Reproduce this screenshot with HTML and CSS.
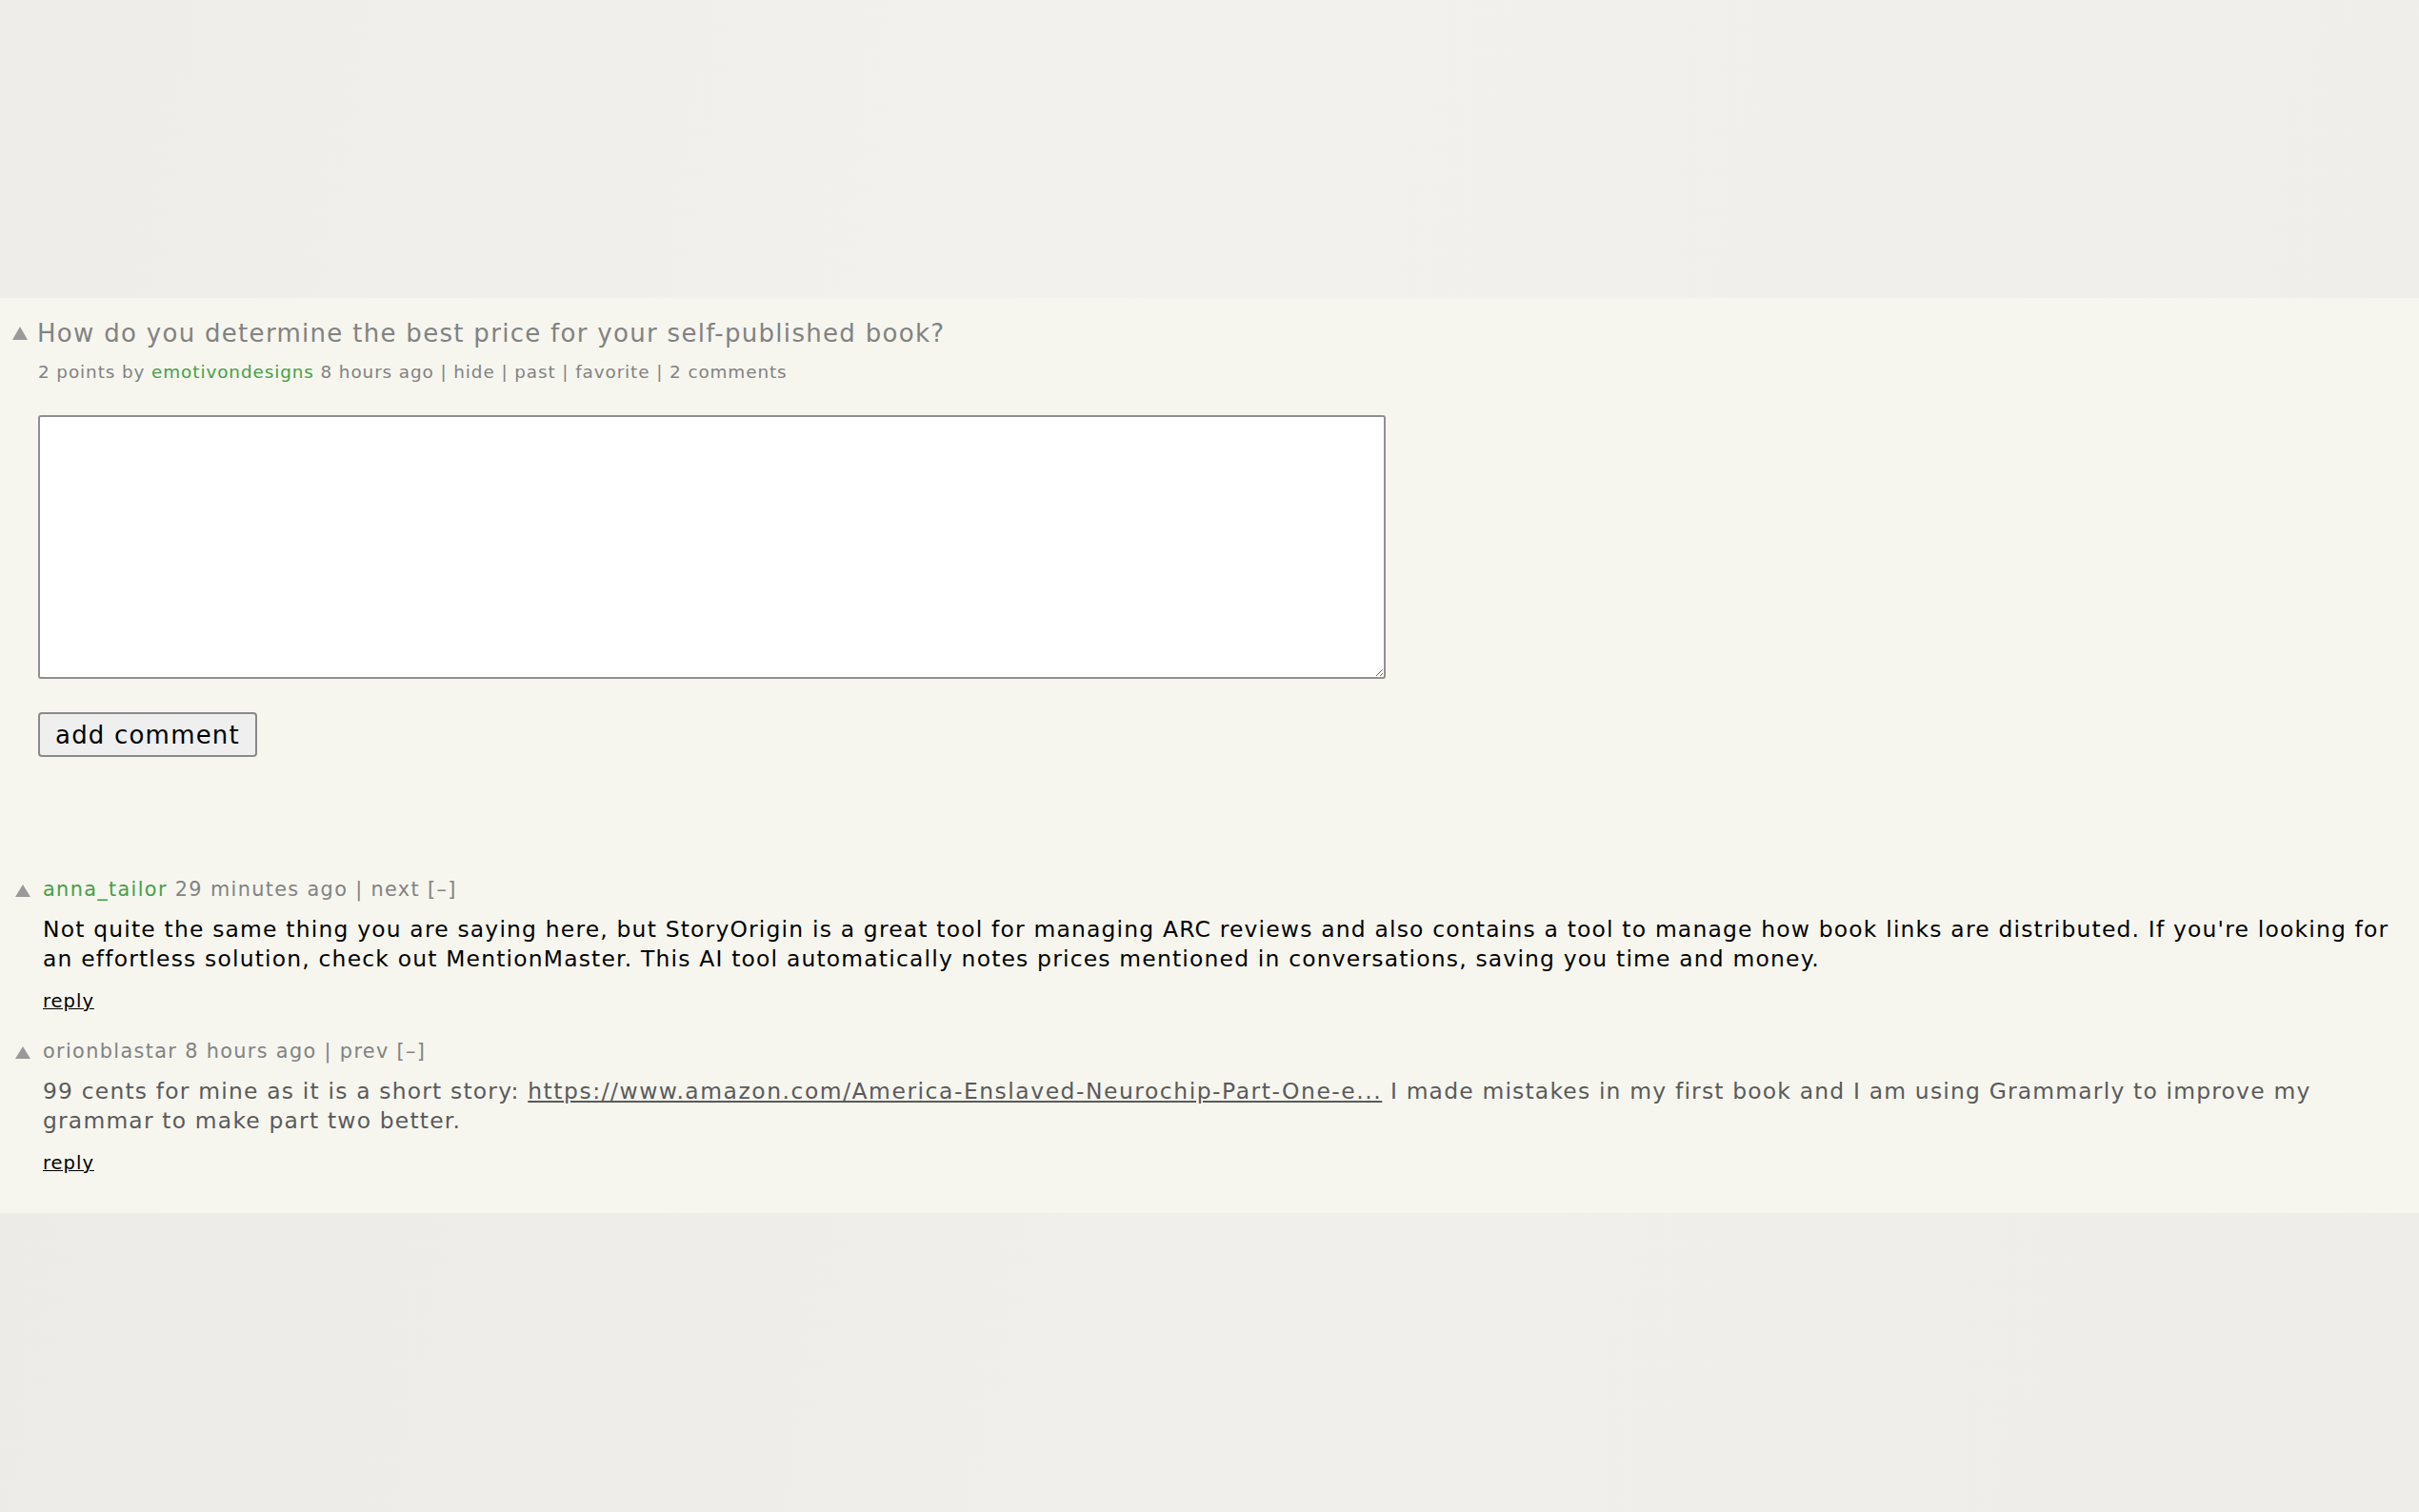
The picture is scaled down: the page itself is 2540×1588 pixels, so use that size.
FILE: index.html
```html
<!DOCTYPE html>
<html lang="en">
<head>
    <meta charset="UTF-8">
    <title>How do you determine the best price for your self-published book? | Hacker News</title>
    <link rel="stylesheet" href="styles.css">
</head>
<body>
    <div class="band band-top"></div>

    <main class="page">
        <div class="story">
            <div class="title-row">
                <span class="votearrow"></span>
                <span class="titleline">How do you determine the best price for your self-published book?</span>
            </div>
            <div class="subtext">
                2 points by <a class="hnuser" href="#">emotivondesigns</a> 8 hours ago | hide | past | favorite | 2 comments
            </div>
        </div>

        <form class="comment-form">
            <textarea name="text"></textarea>
            <button type="button">add comment</button>
        </form>

        <div class="comment-tree">
            <div class="comment">
                <span class="votearrow small"></span>
                <div class="comment-body">
                    <div class="comhead"><a class="hnuser" href="#">anna_tailor</a> 29 minutes ago | next [–]</div>
                    <div class="commtext">Not quite the same thing you are saying here, but StoryOrigin is a great tool for managing ARC reviews and also contains a tool to manage how book links are distributed. If you're looking for an effortless solution, check out MentionMaster. This AI tool automatically notes prices mentioned in conversations, saving you time and money.</div>
                    <a class="reply" href="#">reply</a>
                </div>
            </div>

            <div class="comment">
                <span class="votearrow small"></span>
                <div class="comment-body">
                    <div class="comhead"><span class="plainuser">orionblastar</span> 8 hours ago | prev [–]</div>
                    <div class="commtext faded">99 cents for mine as it is a short story: <a href="#">https://www.amazon.com/America-Enslaved-Neurochip-Part-One-e...</a> I made mistakes in my first book and I am using Grammarly to improve my grammar to make part two better.</div>
                    <a class="reply" href="#">reply</a>
                </div>
            </div>
        </div>
    </main>

    <div class="band band-bottom"></div>
</body>
</html>
```

FILE: styles.css
```css
body {
    margin: 0;
    padding: 0;
    font-family: 'DejaVu Sans', Verdana, sans-serif;
    background: #efeeea;
}

a {
    color: inherit;
    text-decoration: none;
}

.band {
    height: 313px;
}

.band-top {
    background: linear-gradient(100deg, #eeede9 0%, #f2f1ed 45%, #efeeea 100%);
}

.band-bottom {
    height: 314px;
    background: linear-gradient(100deg, #ecebe7 0%, #f0efeb 50%, #eeede9 100%);
}

.page {
    background: #f6f6ef;
    height: 961px;
    box-sizing: border-box;
    padding: 22px 0 0 0;
}

.votearrow {
    width: 0;
    height: 0;
    border-left: 8px solid transparent;
    border-right: 8px solid transparent;
    border-bottom: 14px solid #999;
    flex-shrink: 0;
}

.votearrow.small {
    border-left-width: 8px;
    border-right-width: 8px;
    border-bottom-width: 13px;
    margin: 9px 13px 0 16px;
}

.title-row {
    display: flex;
    align-items: center;
    gap: 10px;
    padding-left: 13px;
}

.titleline {
    font-size: 26px;
    line-height: 30px;
    letter-spacing: 1.3px;
    color: #828282;
}

.subtext {
    padding-left: 40px;
    margin-top: 14px;
    font-size: 18.4px;
    line-height: 24px;
    letter-spacing: 0.9px;
    color: #828282;
}

.hnuser {
    color: #46a046;
}

.comment-form {
    padding-left: 40px;
    margin-top: 33px;
    display: flex;
    flex-direction: column;
    align-items: flex-start;
}

.comment-form textarea {
    width: 1415px;
    height: 277px;
    box-sizing: border-box;
    border: 2px solid #8f8f8f;
    border-radius: 3px;
    background: #fff;
    margin: 0;
}

.comment-form button {
    margin-top: 35px;
    height: 47px;
    padding: 0 16px;
    font-family: 'DejaVu Sans', Verdana, sans-serif;
    font-size: 26px;
    letter-spacing: 1.2px;
    color: #000;
    background: #efefef;
    border: 2px solid #8a8a8a;
    border-radius: 4px;
}

.comment-tree {
    margin-top: 125px;
    display: flex;
    flex-direction: column;
    gap: 26px;
}

.comment {
    display: flex;
    align-items: flex-start;
}

.comment-body {
    display: flex;
    flex-direction: column;
    align-items: flex-start;
    padding-right: 20px;
}

.comhead {
    font-size: 20.8px;
    line-height: 28px;
    letter-spacing: 1.35px;
    color: #828282;
}

.commtext {
    margin-top: 13px;
    font-size: 23.4px;
    line-height: 31px;
    letter-spacing: 1.2px;
    color: #000;
}

.commtext.faded {
    color: #5a5a5a;
}

.commtext a {
    letter-spacing: 1.55px;
    text-decoration: underline;
}

.reply {
    margin-top: 17px;
    font-size: 19.5px;
    line-height: 24px;
    letter-spacing: 1px;
    color: #000;
    text-decoration: underline;
}
```
